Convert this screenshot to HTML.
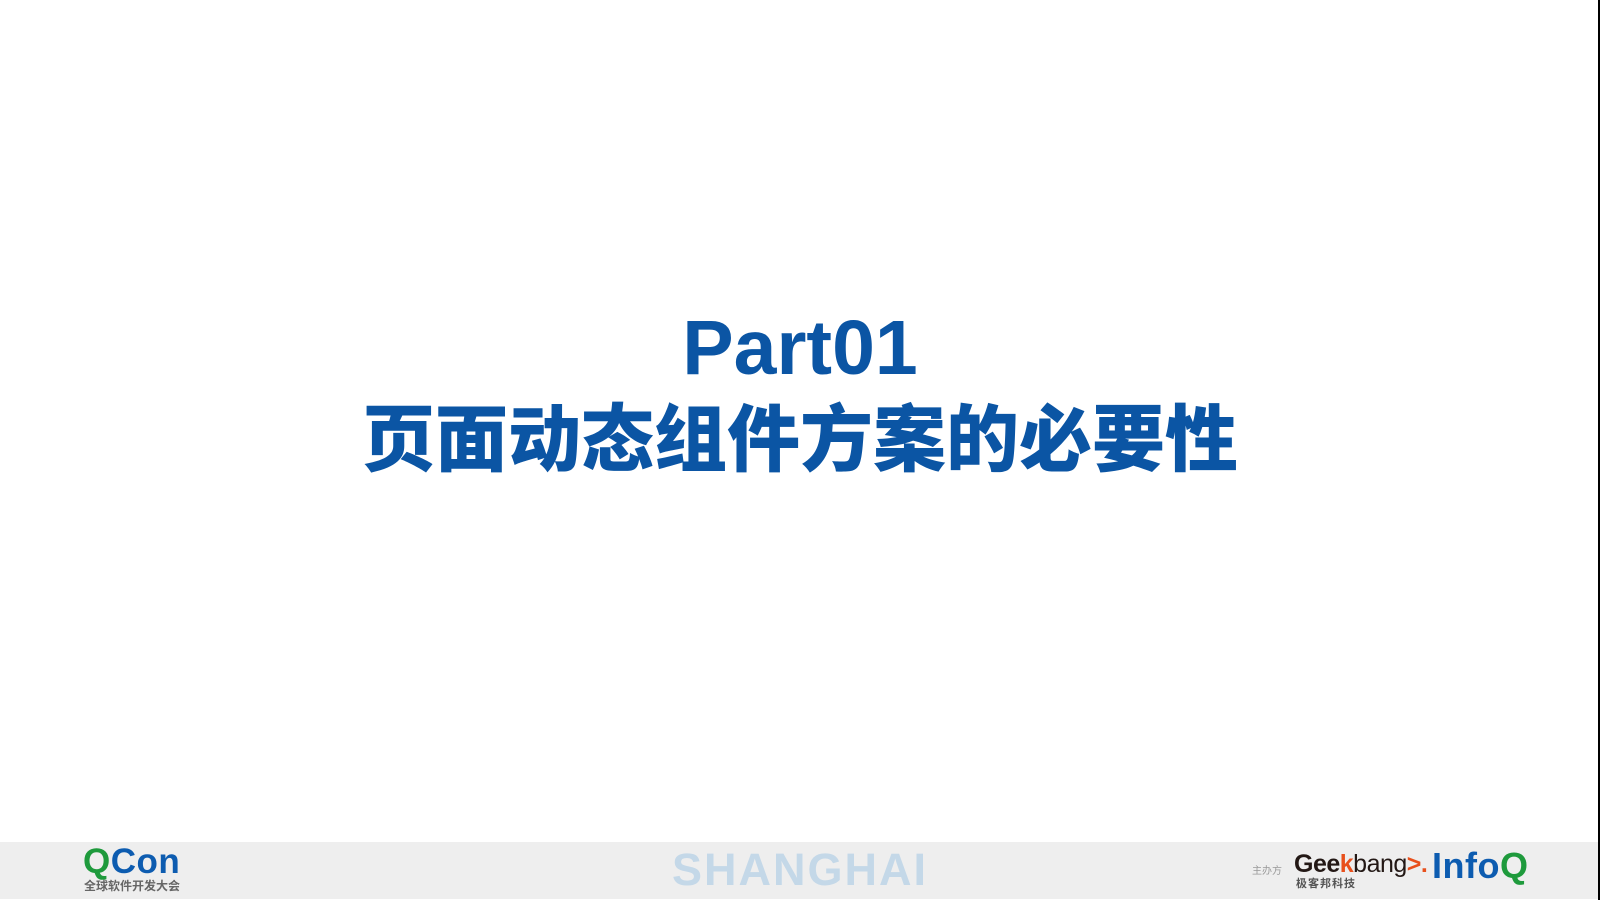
<!DOCTYPE html>
<html><head><meta charset="utf-8"><style>
html,body{margin:0;padding:0;width:1600px;height:900px;overflow:hidden;background:#fff;position:relative;font-family:"Liberation Sans","Noto Sans CJK SC",sans-serif}
.abs{position:absolute;white-space:nowrap}
.t{color:#0b55a4;font-weight:bold;text-align:center;left:0;width:1600px}
</style></head><body>
<div class="abs t" style="top:303px;font-size:77px;line-height:90px">Part01</div>
<div class="abs t" style="top:389px;font-size:73px;line-height:90px;font-family:'Noto Sans CJK SC',sans-serif;font-weight:900">页面动态组件方案的必要性</div>
<div class="abs" style="left:0;top:842px;width:1598px;height:57px;background:#eeeeee"></div>
<div class="abs" style="left:1598px;top:0;width:2px;height:900px;background:#000"></div>
<div class="abs" style="left:83px;top:843px;font-size:35px;font-weight:bold;line-height:38px;letter-spacing:0.5px"><span style="color:#1e9a3c">Q</span><span style="color:#0d5cb0">Con</span></div>
<div class="abs" style="left:84px;top:879px;font-size:12px;color:#666;line-height:14px;font-weight:bold;font-family:'Noto Sans CJK SC',sans-serif">全球软件开发大会</div>
<div class="abs" style="left:672px;top:846px;font-size:45px;font-weight:bold;color:#c4d8e8;line-height:48px;letter-spacing:2px">SHANGHAI</div>
<div class="abs" style="left:1252px;top:862px;font-size:10px;color:#999;font-family:'Noto Sans CJK SC',sans-serif">主办方</div>
<div class="abs" style="left:1294px;top:850px;font-size:25px;font-weight:bold;color:#231815;line-height:28px;letter-spacing:-0.5px">Gee<span style="color:#e8501c">k</span><span style="font-weight:normal">bang</span><span style="color:#e8501c">&gt;.</span></div>
<div class="abs" style="left:1296px;top:875px;font-size:11px;color:#555;font-weight:bold;font-family:'Noto Sans CJK SC',sans-serif;letter-spacing:1px">极客邦科技</div>
<div class="abs" style="left:1432px;top:846px;font-size:36px;font-weight:bold;line-height:40px;letter-spacing:0.5px"><span style="color:#0d5cb0">Info</span><span style="color:#1e9a3c">Q</span></div>
</body></html>
